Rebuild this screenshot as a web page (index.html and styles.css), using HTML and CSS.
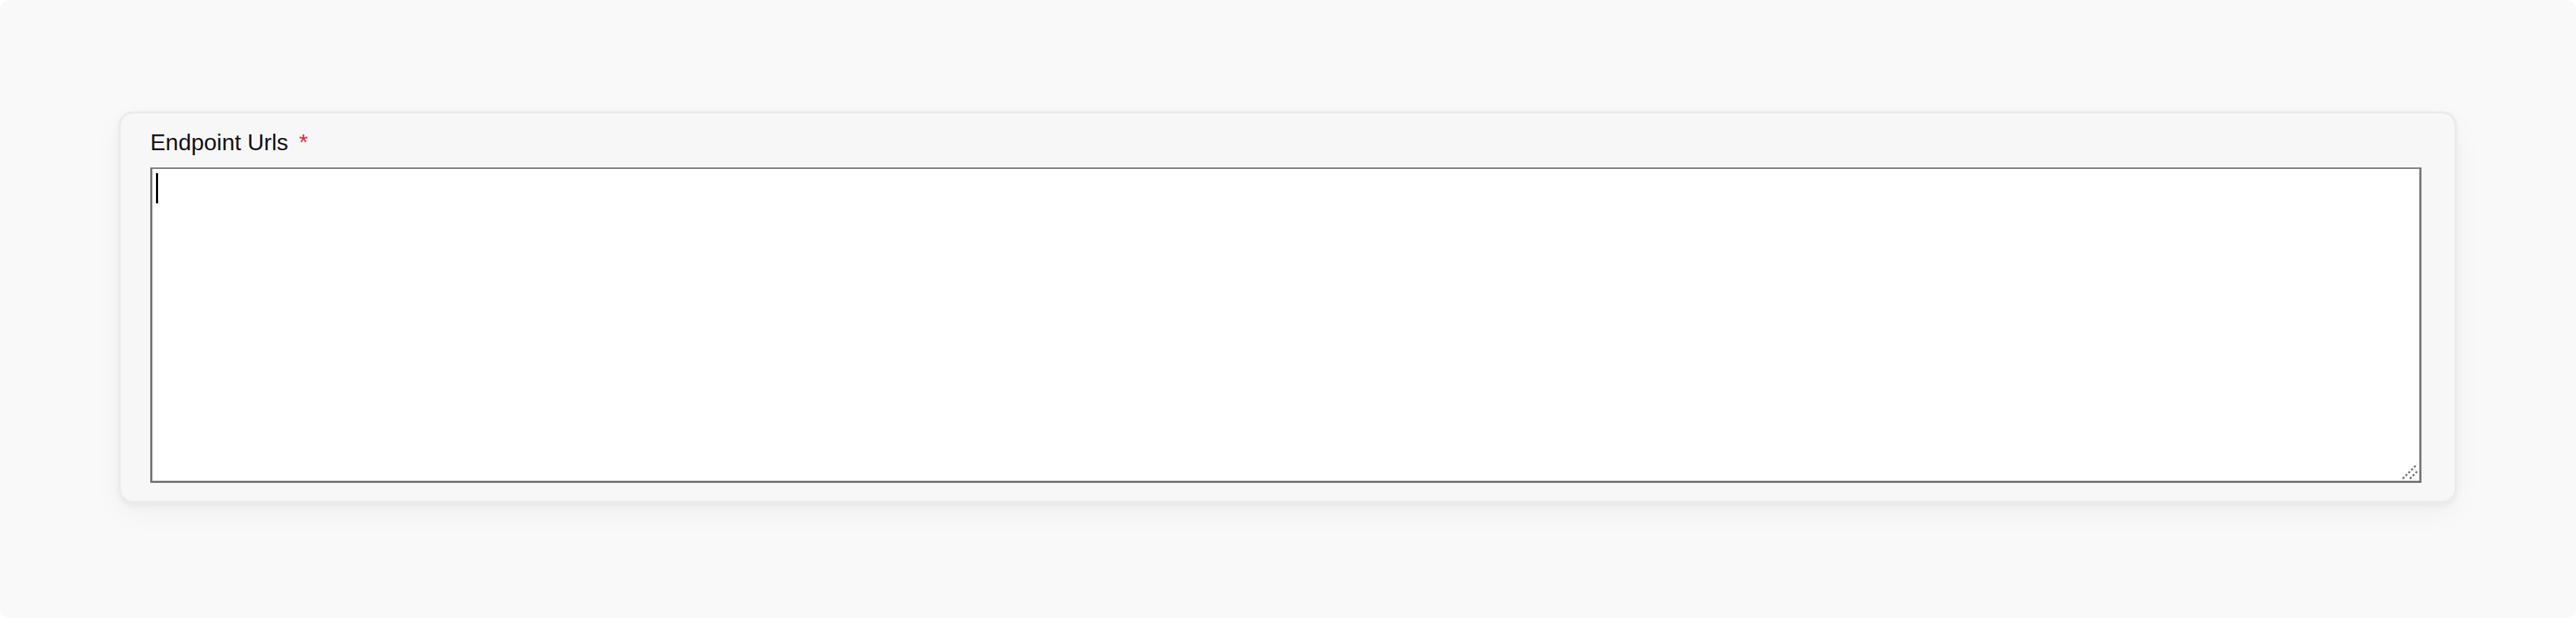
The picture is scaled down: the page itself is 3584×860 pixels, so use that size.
FILE: index.html
```html
<!DOCTYPE html>
<html lang="en">
<head>
  <meta charset="UTF-8">
  <meta name="viewport" content="width=device-width, initial-scale=1.0">
  <title>Endpoint Urls</title>
  <link rel="stylesheet" href="styles.css">
</head>
<body>

  <div class="frame">
    <div class="card">
      <label for="endpointUrls" class="field-label">Endpoint Urls <span class="required">*</span></label>
      <div class="textarea-wrap">
        <textarea id="endpointUrls" class="field-input"></textarea>
        <span class="caret"></span>
        <svg class="grip" width="24" height="24" viewBox="0 0 24 24">
          <path d="M2 22 L22 2" stroke="#6a6a6a" stroke-width="2.6" stroke-dasharray="2.8 2.8" fill="none"/>
          <path d="M12 22 L22 12" stroke="#6a6a6a" stroke-width="2.6" stroke-dasharray="2.8 2.8" fill="none"/>
        </svg>
      </div>
    </div>
  </div>

</body>
</html>
```

FILE: styles.css
```css
html, body {
  margin: 0;
  background: #ffffff;
}
body {
  font-family: "Liberation Sans", Arial, sans-serif;
}
.frame {
  width: 3584px;
  height: 860px;
  box-sizing: border-box;
  padding: 155px 166px 0 165px;
  background: #f9f9f9;
  border-radius: 14px;
}
.card {
  background: #f7f7f7;
  border: 3px solid #ebebeb;
  border-radius: 20px;
  padding: 22px 46px 25px 41px;
  box-shadow: 0 4px 10px rgba(0, 0, 0, 0.05), 0 14px 40px rgba(0, 0, 0, 0.04);
}
.field-label {
  display: block;
  font-size: 32px;
  line-height: 37px;
  color: #111;
  margin-bottom: 16px;
}
.required {
  color: #e0243a;
  margin-left: 6px;
}
.textarea-wrap {
  position: relative;
}
.field-input {
  display: block;
  width: 100%;
  height: 439px;
  box-sizing: border-box;
  margin: 0;
  padding: 6px 8px;
  border-style: solid;
  border-color: #767676;
  border-width: 2px 3px 3px 3px;
  background: #ffffff;
  resize: none;
  outline: none;
  font-family: "Liberation Sans", Arial, sans-serif;
  font-size: 32px;
}
.caret {
  position: absolute;
  left: 8px;
  top: 8px;
  width: 3px;
  height: 42px;
  background: #000;
}
.grip {
  position: absolute;
  right: 4px;
  bottom: 4px;
}
```
